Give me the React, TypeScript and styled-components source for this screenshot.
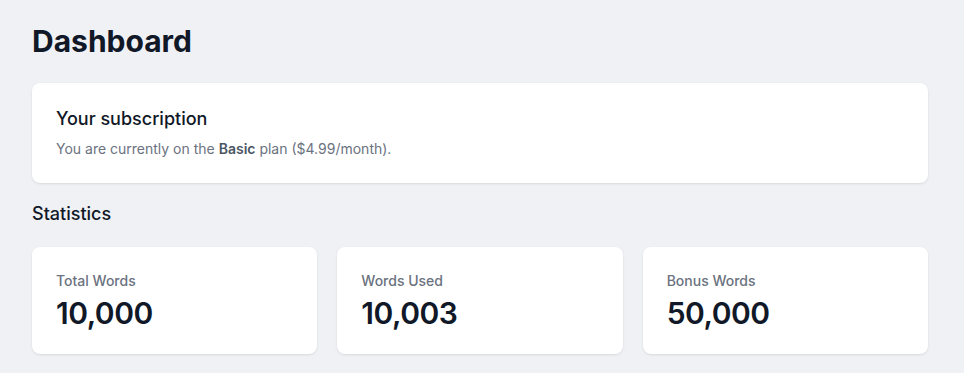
import styled, { createGlobalStyle } from 'styled-components'

const GlobalStyle = createGlobalStyle`
	* {
		box-sizing: border-box;
	}
	body {
		margin: 0;
		background: #f0f1f5;
		font-family: Inter, 'Noto Sans', sans-serif;
		color: #111827;
	}
`

const stats = [
	{ label: 'Total Words', value: '10,000' },
	{ label: 'Words Used', value: '10,003' },
	{ label: 'Bonus Words', value: '50,000' },
]

const App = () => {
	return (
		<>
			<GlobalStyle />
			<Page>
				<Title>Dashboard</Title>

				<Card>
					<CardTitle>Your subscription</CardTitle>
					<CardText>
						You are currently on the <strong>Basic</strong> plan ($4.99/month).
					</CardText>
				</Card>

				<SectionTitle>Statistics</SectionTitle>

				<StatGrid>
					{stats.map((stat) => (
						<StatCard key={stat.label}>
							<StatLabel>{stat.label}</StatLabel>
							<StatValue>{stat.value}</StatValue>
						</StatCard>
					))}
				</StatGrid>
			</Page>
		</>
	)
}

export default App

const Page = styled.main`
	padding: 23px 36px 32px 32px;
	min-height: 100vh;
`

const Title = styled.h1`
	margin: 0 0 24px;
	font-size: 30px;
	line-height: 36px;
	font-weight: 700;
	color: #111827;
`

const Card = styled.section`
	background: #ffffff;
	border-radius: 8px;
	padding: 24px;
	box-shadow: 0 1px 3px 0 rgba(0, 0, 0, 0.08), 0 1px 2px -1px rgba(0, 0, 0, 0.08);
`

const CardTitle = styled.h2`
	margin: 0;
	font-size: 18px;
	line-height: 24px;
	font-weight: 500;
	color: #111827;
`

const CardText = styled.p`
	margin: 8px 0 0;
	font-size: 14px;
	line-height: 20px;
	color: #6b7280;

	strong {
		font-weight: 600;
		color: #4b5563;
	}
`

const SectionTitle = styled.h3`
	margin: 17px 0 19px;
	font-size: 18px;
	line-height: 28px;
	font-weight: 500;
	color: #111827;
`

const StatGrid = styled.div`
	display: grid;
	grid-template-columns: repeat(3, 1fr);
	gap: 20px;
`

const StatCard = styled(Card)`
	padding: 24px 24px 23px;
`

const StatLabel = styled.div`
	font-size: 14px;
	line-height: 20px;
	font-weight: 500;
	color: #6b7280;
`

const StatValue = styled.div`
	margin-top: 4px;
	font-size: 30px;
	line-height: 36px;
	font-weight: 600;
	letter-spacing: -0.5px;
	color: #111827;
`
